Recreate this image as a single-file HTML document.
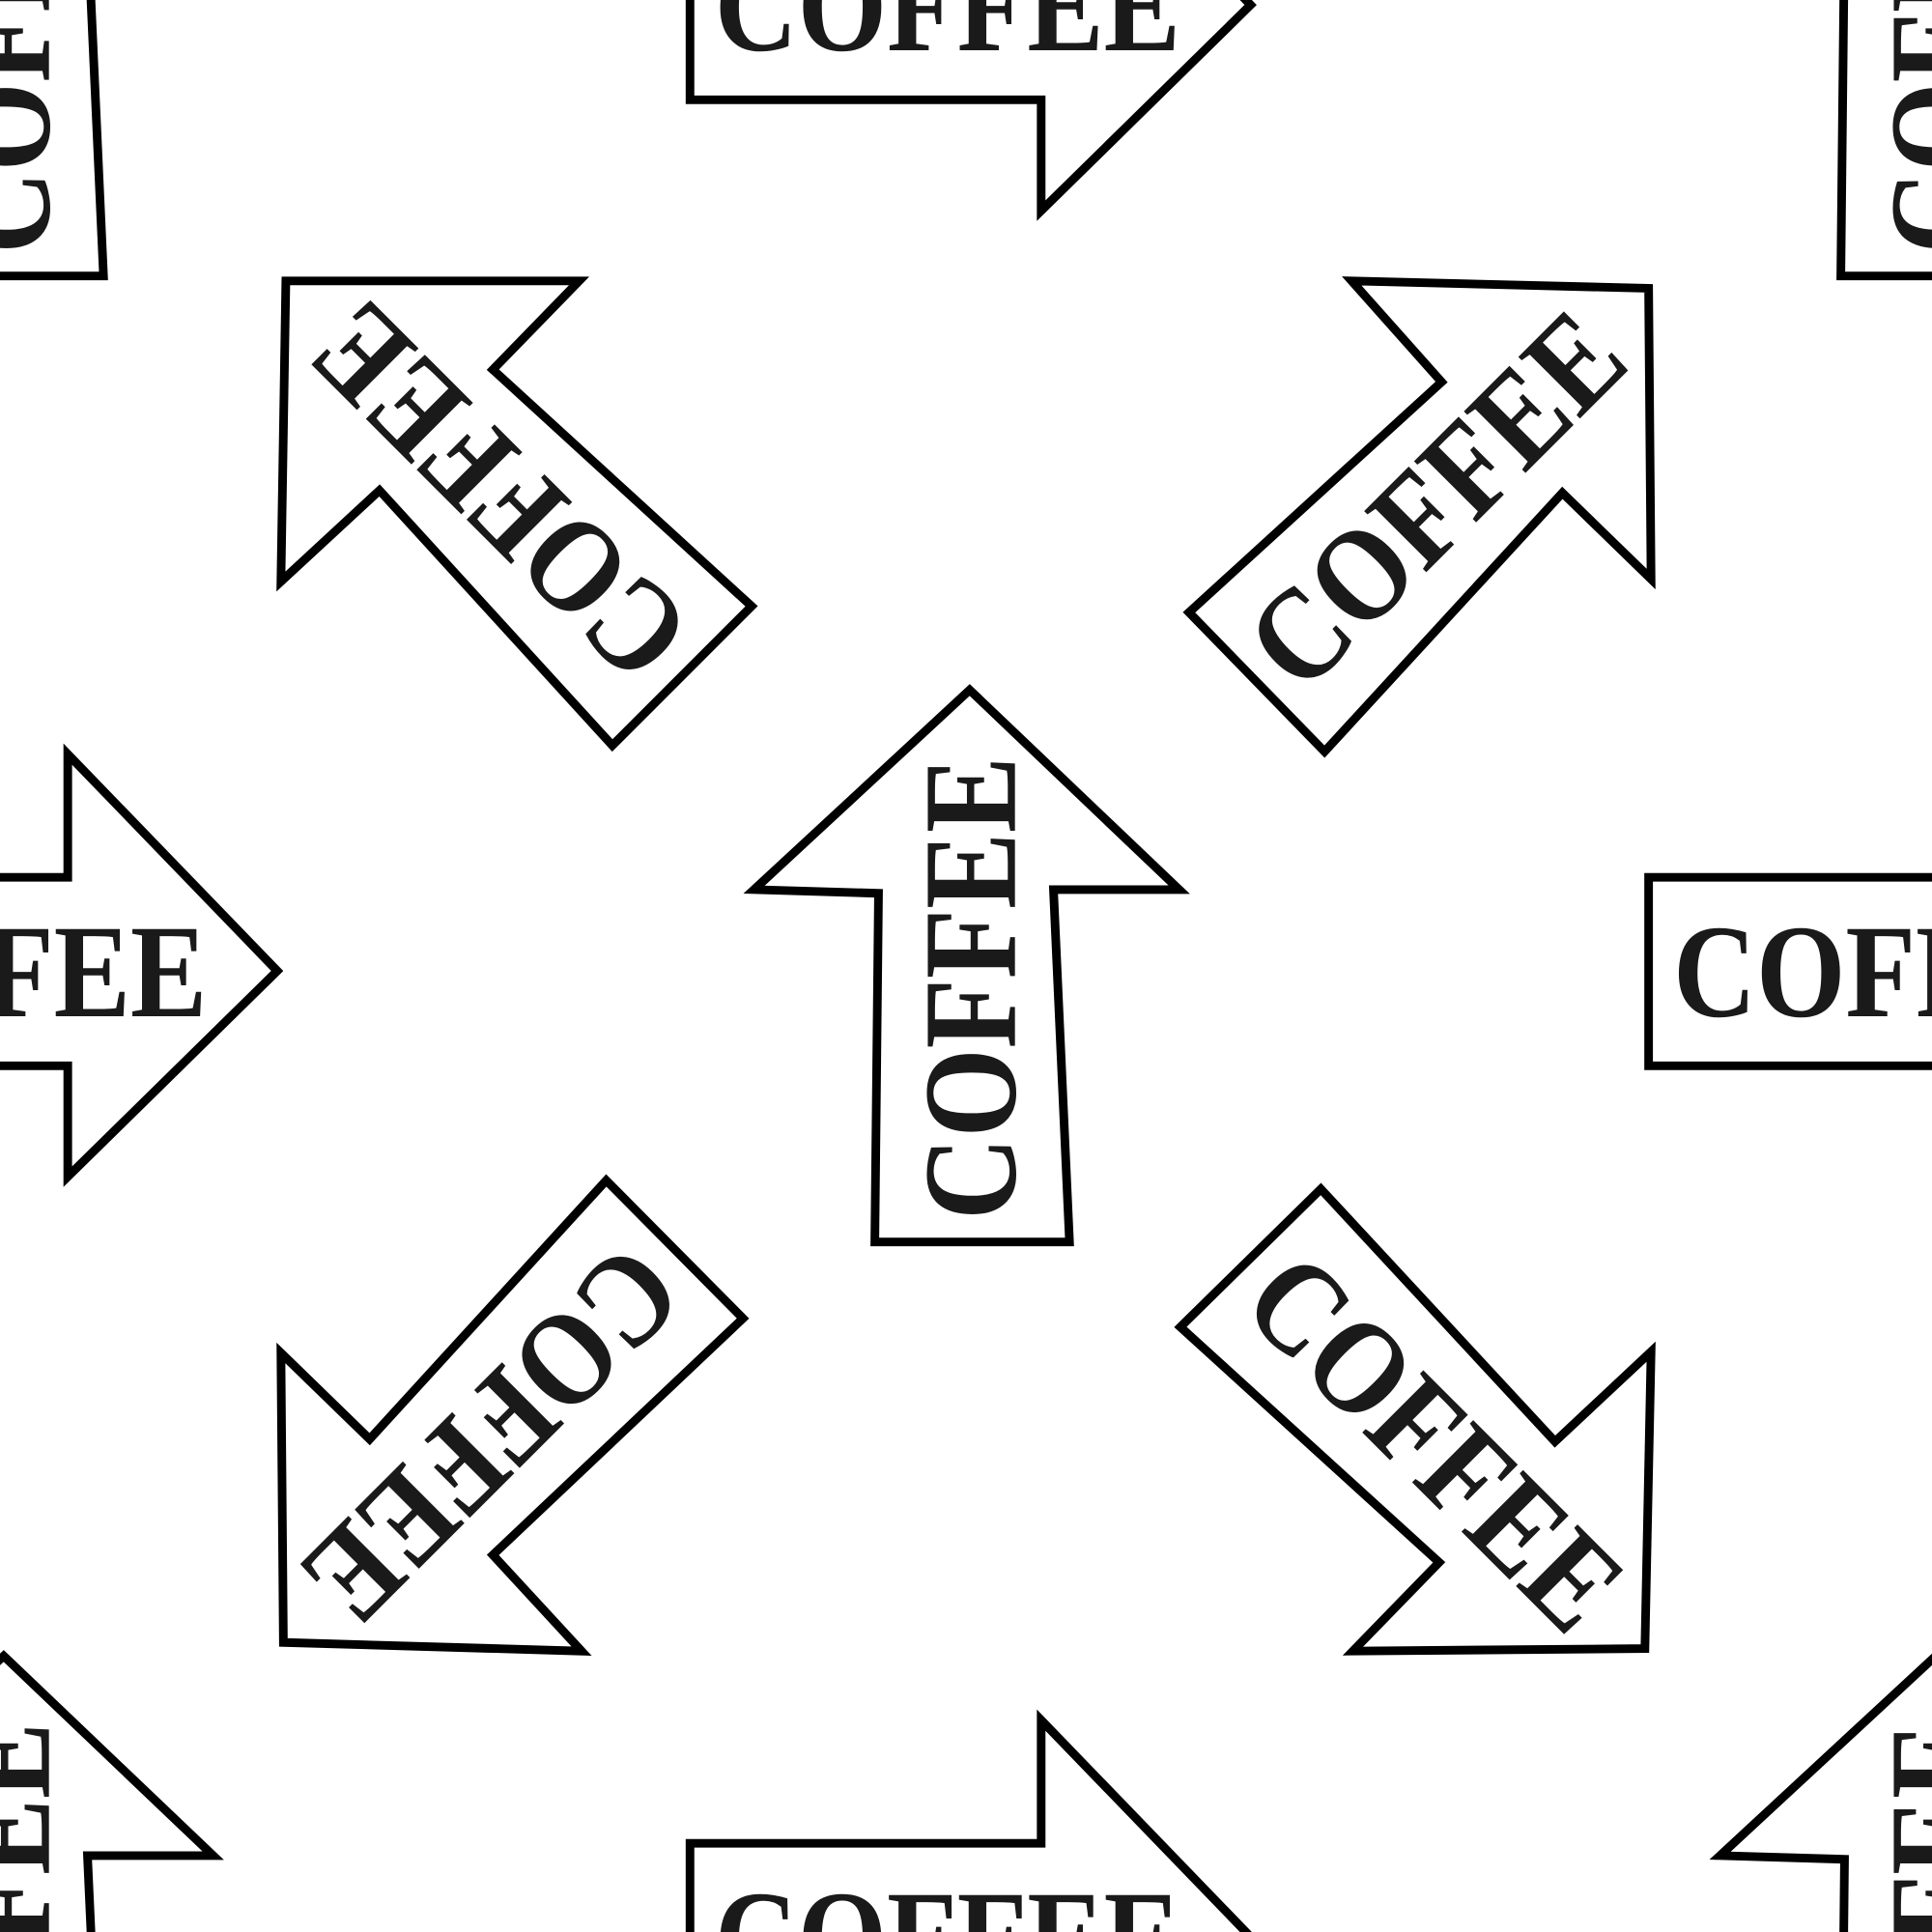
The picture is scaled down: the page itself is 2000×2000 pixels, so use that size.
<!DOCTYPE html>
<html><head><meta charset="utf-8"><style>
html,body{margin:0;padding:0;background:#fff;width:2000px;height:2000px;overflow:hidden}
svg{display:block;overflow:hidden}
text{font-family:"Liberation Serif",serif;font-weight:bold;font-size:108px;fill:#1a1a1a}
polygon{fill:#fff;stroke:#000;stroke-width:7;stroke-linejoin:miter}
</style></head><body>
<svg width="2000" height="2000" viewBox="0 0 1568 1568" xmlns="http://www.w3.org/2000/svg">
<defs>
<g id="up">
<polygon points="0,-224 170,-62 68,-62 81,224 -77,224 -74,-59 -175,-62"/>
<text x="-18" y="0" dy="0.34em" text-anchor="middle" textLength="376" lengthAdjust="spacingAndGlyphs" transform="rotate(-90)">COFFEE</text>
</g>
<g id="right">
<polygon points="-227,-73 58,-73 58,-173 228,3 58,170 58,80 -227,80"/>
<text x="-18" y="3" dy="0.34em" text-anchor="middle" textLength="378" lengthAdjust="spacingAndGlyphs">COFFEE</text>
</g>
</defs>
<use href="#up" x="787" y="784"/>
<use href="#up" x="3" y="0"/>
<use href="#up" x="1571" y="0"/>
<use href="#up" x="3" y="1568"/>
<use href="#up" x="1571" y="1568"/>
<use href="#right" x="-3" y="785"/>
<use href="#right" x="1565" y="785"/>
<use href="#right" x="787" y="1"/>
<use href="#right" x="787" y="1569"/>
<polygon points="232,228 470,228 400,300 610,492 497,605 308,398 228,472"/>
<text x="0" y="0" dy="0.34em" text-anchor="middle" textLength="380" lengthAdjust="spacingAndGlyphs" transform="translate(405,400) rotate(225)">COFFEE</text>
<polygon points="1097,228 1338,234 1340,470 1268,400 1075,610 965,497 1170,310"/>
<text x="0" y="0" dy="0.34em" text-anchor="middle" textLength="380" lengthAdjust="spacingAndGlyphs" transform="translate(1165,405) rotate(-45)">COFFEE</text>
<polygon points="228,1098 300,1168 492,958 603,1070 400,1262 472,1340 230,1333"/>
<text x="0" y="0" dy="0.34em" text-anchor="middle" textLength="380" lengthAdjust="spacingAndGlyphs" transform="translate(400,1165) rotate(135)">COFFEE</text>
<polygon points="958,1077 1072,965 1262,1170 1340,1097 1335,1338 1098,1340 1168,1268"/>
<text x="0" y="0" dy="0.34em" text-anchor="middle" textLength="380" lengthAdjust="spacingAndGlyphs" transform="translate(1165,1170) rotate(45)">COFFEE</text>
</svg>
</body></html>
